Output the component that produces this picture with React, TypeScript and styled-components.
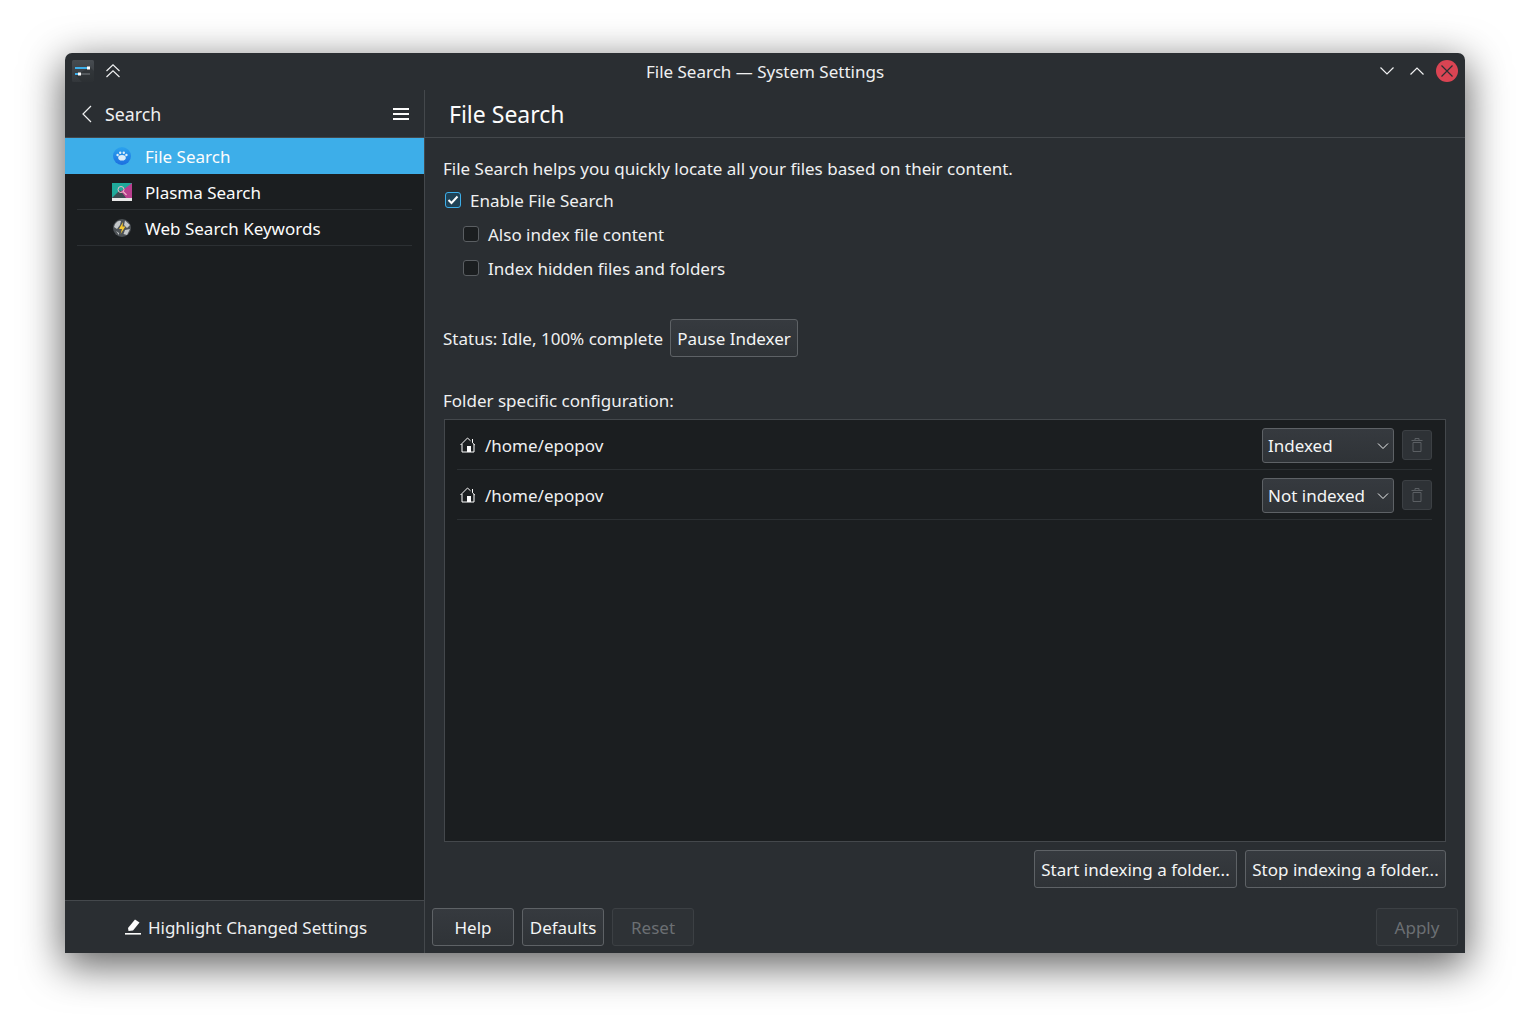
import React from 'react'
import styled, { createGlobalStyle } from 'styled-components'

const GlobalStyle = createGlobalStyle`
    html, body {
        margin: 0;
        padding: 0;
        background: #fff;
    }
    body {
        font-family: "Noto Sans", "Liberation Sans", sans-serif;
        font-size: 17px;
        color: #eff0f1;
    }
`

const Page = styled.div`
    width: 1530px;
    height: 1030px;
    padding: 53px 65px 77px;
    box-sizing: border-box;
    overflow: hidden;
`

const Window = styled.div`
    width: 1400px;
    height: 900px;
    display: flex;
    flex-direction: column;
    background: #2a2e32;
    border-radius: 7px 7px 0 0;
    box-shadow: 0 11px 40px 2px rgba(0, 0, 0, 0.62);
    overflow: hidden;
`

const TitleBar = styled.div`
    height: 37px;
    flex: none;
    display: grid;
    grid-template-columns: 1fr auto 1fr;
    align-items: center;
    padding: 0 7px;
`

const TitleLeft = styled.div`
    display: flex;
    align-items: center;
    gap: 11px;
    margin-top: -2px;
`

const TitleRight = styled.div`
    display: flex;
    align-items: center;
    justify-content: flex-end;
    gap: 8px;
    margin-top: -2px;
`

const Title = styled.div`
    line-height: 37px;
`

const WindowButton = styled.div`
    width: 22px;
    height: 22px;
    display: flex;
    align-items: center;
    justify-content: center;
`

const CloseButton = styled(WindowButton)`
    border-radius: 50%;
    background: #da4453;
`

const Columns = styled.div`
    flex: 1;
    min-height: 0;
    display: flex;
`

const Sidebar = styled.div`
    width: 359px;
    flex: none;
    display: flex;
    flex-direction: column;
    border-right: 1px solid #44484c;
`

const SideHeader = styled.div`
    height: 47px;
    flex: none;
    display: flex;
    align-items: center;
    padding: 0 15px 0 16px;
    border-bottom: 1px solid #44484c;
    font-size: 17.8px;
`

const SideHeaderTitle = styled.span`
    flex: 1;
    margin-left: 12px;
`

const SideList = styled.div`
    flex: 1;
    background: #1b1e20;
`

const SideItem = styled.div<{ $selected?: boolean }>`
    height: 36px;
    display: flex;
    align-items: center;
    gap: 13px;
    padding-left: 47px;
    position: relative;
    background: ${({ $selected }) => ($selected ? '#3daee9' : 'transparent')};
    color: #fcfcfc;

    ${({ $selected }) =>
        !$selected &&
        `&::after {
            content: '';
            position: absolute;
            left: 12px;
            right: 12px;
            bottom: 0;
            height: 1px;
            background: #2c3033;
        }`}
`

const IconSlot = styled.span`
    width: 20px;
    flex: none;
    display: flex;
    justify-content: center;
`

const SideFooter = styled.div`
    height: 53px;
    flex: none;
    box-sizing: border-box;
    display: flex;
    align-items: center;
    justify-content: center;
    gap: 6px;
    padding-left: 2px;
    border-top: 1px solid #44484c;
`

const Main = styled.div`
    flex: 1;
    min-width: 0;
    display: flex;
    flex-direction: column;
`

const MainHeader = styled.div`
    height: 47px;
    flex: none;
    display: flex;
    align-items: center;
    padding-left: 24px;
    border-bottom: 1px solid #44484c;
    font-size: 23px;
    color: #fcfcfc;
`

const Content = styled.div`
    flex: 1;
    min-height: 0;
    display: flex;
    flex-direction: column;
    padding: 18px 19px 0 18px;
`

const TextLine = styled.div`
    line-height: 26px;
`

const CheckGroup = styled.div`
    margin-top: 1px;
`

const CheckRow = styled.label<{ $nested?: boolean }>`
    height: 34px;
    display: flex;
    align-items: center;
    gap: 9px;
    padding-left: ${({ $nested }) => ($nested ? '20px' : '2px')};
`

const CheckBox = styled.span<{ $checked?: boolean }>`
    width: 16px;
    height: 16px;
    box-sizing: border-box;
    flex: none;
    display: flex;
    align-items: center;
    justify-content: center;
    border-radius: 3px;
    background: ${({ $checked }) => ($checked ? '#1f4256' : '#1b1e20')};
    border: 1px solid ${({ $checked }) => ($checked ? '#3daee9' : '#5a5e62')};
`

const StatusRow = styled.div`
    display: flex;
    align-items: center;
    gap: 7px;
    margin-top: 34px;
`

const Button = styled.div<{ $disabled?: boolean; $width?: number }>`
    height: 38px;
    box-sizing: border-box;
    width: ${({ $width }) => ($width ? `${$width}px` : 'auto')};
    padding: ${({ $width }) => ($width ? '0' : '0 6px')};
    display: flex;
    align-items: center;
    justify-content: center;
    white-space: nowrap;
    border-radius: 3px;
    background: ${({ $disabled }) =>
        $disabled ? '#2e3236' : 'linear-gradient(#363a3f, #2f3337)'};
    border: 1px solid ${({ $disabled }) => ($disabled ? '#3c4044' : '#5e6266')};
    color: ${({ $disabled }) => ($disabled ? '#6b6f73' : '#f4f5f5')};
`

const FolderLabel = styled(TextLine)`
    margin-top: 31px;
`

const FolderList = styled.div`
    height: 423px;
    flex: none;
    box-sizing: border-box;
    margin: 5px 0 0 1px;
    padding: 0 13px 0 12px;
    background: #1b1e20;
    border: 1px solid #44484c;
`

const FolderRow = styled.div`
    height: 50px;
    box-sizing: border-box;
    display: flex;
    align-items: center;
    gap: 9px;
    padding: 2px 0 0 3px;
    border-bottom: 1px solid #2c3033;
`

const FolderIcon = styled.span`
    display: flex;
    margin-top: -1px;
`

const FolderPath = styled.span`
    flex: 1;
`

const Combo = styled.div`
    width: 132px;
    height: 35px;
    box-sizing: border-box;
    flex: none;
    display: flex;
    align-items: center;
    justify-content: space-between;
    padding: 0 4px 0 5px;
    border-radius: 3px;
    background: linear-gradient(#363a3f, #2f3337);
    border: 1px solid #5e6266;
    color: #f4f5f5;
`

const TrashButton = styled.div`
    width: 30px;
    height: 30px;
    box-sizing: border-box;
    flex: none;
    margin-left: -1px;
    margin-top: -1px;
    display: flex;
    align-items: center;
    justify-content: center;
    border-radius: 3px;
    background: #2e3236;
    border: 1px solid #3c4044;
`

const FolderActions = styled.div`
    display: flex;
    justify-content: flex-end;
    gap: 8px;
    margin-top: 8px;
`

const ButtonBar = styled.div`
    height: 64px;
    flex: none;
    box-sizing: border-box;
    display: flex;
    align-items: flex-start;
    gap: 8px;
    padding: 19px 7px 0;
`

const Spacer = styled.div`
    flex: 1;
`

const SystemSettingsIcon = () => (
    <svg width="22" height="22" viewBox="0 0 22 22">
        <defs>
            <linearGradient id="settingsTile" x1="0" y1="0" x2="0" y2="1">
                <stop offset="0" stopColor="#474c51" />
                <stop offset="1" stopColor="#33373b" />
            </linearGradient>
        </defs>
        <rect width="22" height="22" rx="1.5" fill="url(#settingsTile)" />
        <path d="M4 15.5 L18 7 L22 11 V22 H10 Z" fill="#24272a" opacity="0.45" />
        <rect x="3" y="7" width="15" height="2" fill="#3daee9" />
        <rect x="15" y="6.5" width="3" height="3" fill="#fcfcfc" />
        <rect x="3" y="13" width="15" height="2" fill="#54595d" />
        <rect x="3" y="13" width="5" height="2" fill="#3daee9" />
        <rect x="6" y="12.5" width="3" height="3" fill="#fcfcfc" />
    </svg>
)

const KeepAboveIcon = () => (
    <svg width="16" height="16" viewBox="0 0 16 16" fill="none" stroke="#eff0f1" strokeWidth="1.2">
        <path d="M1.5 8 L8 1.8 L14.5 8" />
        <path d="M1.5 14 L8 7.8 L14.5 14" />
    </svg>
)

const ChevronIcon = ({ up }: { up?: boolean }) => (
    <svg width="16" height="10" viewBox="0 0 16 10" fill="none" stroke="#eff0f1" strokeWidth="1.2">
        <path d={up ? 'M1.5 8.5 L8 2 L14.5 8.5' : 'M1.5 1.5 L8 8 L14.5 1.5'} />
    </svg>
)

const CloseIcon = () => (
    <svg width="14" height="14" viewBox="0 0 14 14" fill="none" stroke="#2a2e32" strokeWidth="1.2">
        <path d="M1.5 1.5 L12.5 12.5 M12.5 1.5 L1.5 12.5" />
    </svg>
)

const BackIcon = () => (
    <svg width="12" height="18" viewBox="0 0 12 18" fill="none" stroke="#eff0f1" strokeWidth="1.2">
        <path d="M10 1 L2 9 L10 17" />
    </svg>
)

const MenuIcon = () => (
    <svg width="16" height="12" viewBox="0 0 16 12" fill="#fcfcfc">
        <rect y="0" width="16" height="2" />
        <rect y="5" width="16" height="2" />
        <rect y="10" width="16" height="2" />
    </svg>
)

const BalooIcon = () => (
    <svg width="18" height="18" viewBox="0 0 18 18">
        <defs>
            <linearGradient id="baloo" x1="0" y1="0" x2="0" y2="1">
                <stop offset="0" stopColor="#2ba3ee" />
                <stop offset="1" stopColor="#1c6fe0" />
            </linearGradient>
        </defs>
        <circle cx="9" cy="9" r="9" fill="url(#baloo)" />
        <ellipse cx="9" cy="10.7" rx="3.8" ry="2.8" fill="#dcedfa" />
        <circle cx="4.6" cy="8" r="1.2" fill="#dcedfa" />
        <circle cx="7.2" cy="5.8" r="1.2" fill="#dcedfa" />
        <circle cx="10.8" cy="5.8" r="1.2" fill="#dcedfa" />
        <circle cx="13.4" cy="8" r="1.2" fill="#dcedfa" />
    </svg>
)

const PlasmaSearchIcon = () => (
    <svg width="20" height="18" viewBox="0 0 20 18">
        <rect width="20" height="15" fill="#b83f8e" />
        <path d="M0 0 H20 L0 15 Z" fill="#1fa99a" />
        <path d="M0 15 L8 7 L14 15 Z" fill="#3c4a50" />
        <rect y="15" width="20" height="3" fill="#e8e8e8" />
        <circle cx="9" cy="6.5" r="3" fill="none" stroke="#f0b8c8" strokeWidth="1" />
        <path d="M11.2 8.7 L14.5 12" stroke="#f0b8c8" strokeWidth="1.2" />
    </svg>
)

const WebKeywordsIcon = () => (
    <svg width="18" height="18" viewBox="0 0 18 18">
        <circle cx="9" cy="9" r="9" fill="#4d5256" />
        <path d="M2 5 Q5 1 8 2 L7 6 L4 10 L1 8 Z M12 1.5 L17 6 L14 9 L11 6 Z M12 11 L17 10 L14 16 L10.5 15 Z M3 12 L6 14 L6 16 Z" fill="#c4c7c9" />
        <path d="M10 3 L6 10 H9 L7.6 15 L12.4 7.5 H9.5 Z" fill="#f6c830" />
    </svg>
)

const HomeIcon = () => (
    <svg width="16" height="16" viewBox="0 0 16 16" fill="none" stroke="#fcfcfc" strokeWidth="1">
        <path d="M0.5 8 L7.5 1 L10.5 3.8 M12.5 2 V5.8 M14.8 8 L12.5 5.8" />
        <path d="M2 7 V15 H14 V7" />
        <rect x="7" y="9" width="4" height="6" fill="#fcfcfc" stroke="none" />
    </svg>
)

const ComboArrow = () => (
    <svg width="12" height="8" viewBox="0 0 12 8" fill="none" stroke="#eff0f1" strokeWidth="1">
        <path d="M1 1.5 L6 6.5 L11 1.5" />
    </svg>
)

const TrashIcon = () => (
    <svg width="12" height="14" viewBox="0 0 12 14" fill="none" stroke="#5b5f63" strokeWidth="1">
        <path d="M0.5 2.5 H11.5 M4 2.5 V0.5 H8 V2.5 M2 4.5 V13.5 H10 V4.5 M2 4.5 H10" />
    </svg>
)

const CheckIcon = () => (
    <svg width="12" height="10" viewBox="0 0 12 10" fill="none" stroke="#fcfcfc" strokeWidth="2">
        <path d="M1.5 5 L4.5 8 L10.5 1.5" />
    </svg>
)

const HighlightIcon = () => (
    <svg width="18" height="18" viewBox="0 0 18 18" fill="#fcfcfc">
        <path d="M4 10 L11 1.5 L15.5 4.5 L9 12.5 L4.5 13 Z" />
        <rect x="1" y="15" width="16" height="1.6" />
    </svg>
)

const folders = [
    { path: '/home/epopov', state: 'Indexed' },
    { path: '/home/epopov', state: 'Not indexed' }
]

const App = () => (
    <Page>
        <GlobalStyle />
        <Window>
            <TitleBar>
                <TitleLeft>
                    <SystemSettingsIcon />
                    <KeepAboveIcon />
                </TitleLeft>
                <Title>File Search — System Settings</Title>
                <TitleRight>
                    <WindowButton>
                        <ChevronIcon />
                    </WindowButton>
                    <WindowButton>
                        <ChevronIcon up />
                    </WindowButton>
                    <CloseButton>
                        <CloseIcon />
                    </CloseButton>
                </TitleRight>
            </TitleBar>
            <Columns>
                <Sidebar>
                    <SideHeader>
                        <BackIcon />
                        <SideHeaderTitle>Search</SideHeaderTitle>
                        <MenuIcon />
                    </SideHeader>
                    <SideList>
                        <SideItem $selected>
                            <IconSlot>
                                <BalooIcon />
                            </IconSlot>
                            File Search
                        </SideItem>
                        <SideItem>
                            <IconSlot>
                                <PlasmaSearchIcon />
                            </IconSlot>
                            Plasma Search
                        </SideItem>
                        <SideItem>
                            <IconSlot>
                                <WebKeywordsIcon />
                            </IconSlot>
                            Web Search Keywords
                        </SideItem>
                    </SideList>
                    <SideFooter>
                        <HighlightIcon />
                        Highlight Changed Settings
                    </SideFooter>
                </Sidebar>
                <Main>
                    <MainHeader>File Search</MainHeader>
                    <Content>
                        <TextLine>File Search helps you quickly locate all your files based on their content.</TextLine>
                        <CheckGroup>
                            <CheckRow>
                                <CheckBox $checked>
                                    <CheckIcon />
                                </CheckBox>
                                Enable File Search
                            </CheckRow>
                            <CheckRow $nested>
                                <CheckBox />
                                Also index file content
                            </CheckRow>
                            <CheckRow $nested>
                                <CheckBox />
                                Index hidden files and folders
                            </CheckRow>
                        </CheckGroup>
                        <StatusRow>
                            <span>Status: Idle, 100% complete</span>
                            <Button>Pause Indexer</Button>
                        </StatusRow>
                        <FolderLabel>Folder specific configuration:</FolderLabel>
                        <FolderList>
                            {folders.map(folder => (
                                <FolderRow key={folder.state}>
                                    <FolderIcon>
                                        <HomeIcon />
                                    </FolderIcon>
                                    <FolderPath>{folder.path}</FolderPath>
                                    <Combo>
                                        {folder.state}
                                        <ComboArrow />
                                    </Combo>
                                    <TrashButton>
                                        <TrashIcon />
                                    </TrashButton>
                                </FolderRow>
                            ))}
                        </FolderList>
                        <FolderActions>
                            <Button $width={203}>Start indexing a folder...</Button>
                            <Button $width={201}>Stop indexing a folder...</Button>
                        </FolderActions>
                    </Content>
                    <ButtonBar>
                        <Button $width={82}>Help</Button>
                        <Button $width={82}>Defaults</Button>
                        <Button $width={82} $disabled>
                            Reset
                        </Button>
                        <Spacer />
                        <Button $width={82} $disabled>
                            Apply
                        </Button>
                    </ButtonBar>
                </Main>
            </Columns>
        </Window>
    </Page>
)

export default App
